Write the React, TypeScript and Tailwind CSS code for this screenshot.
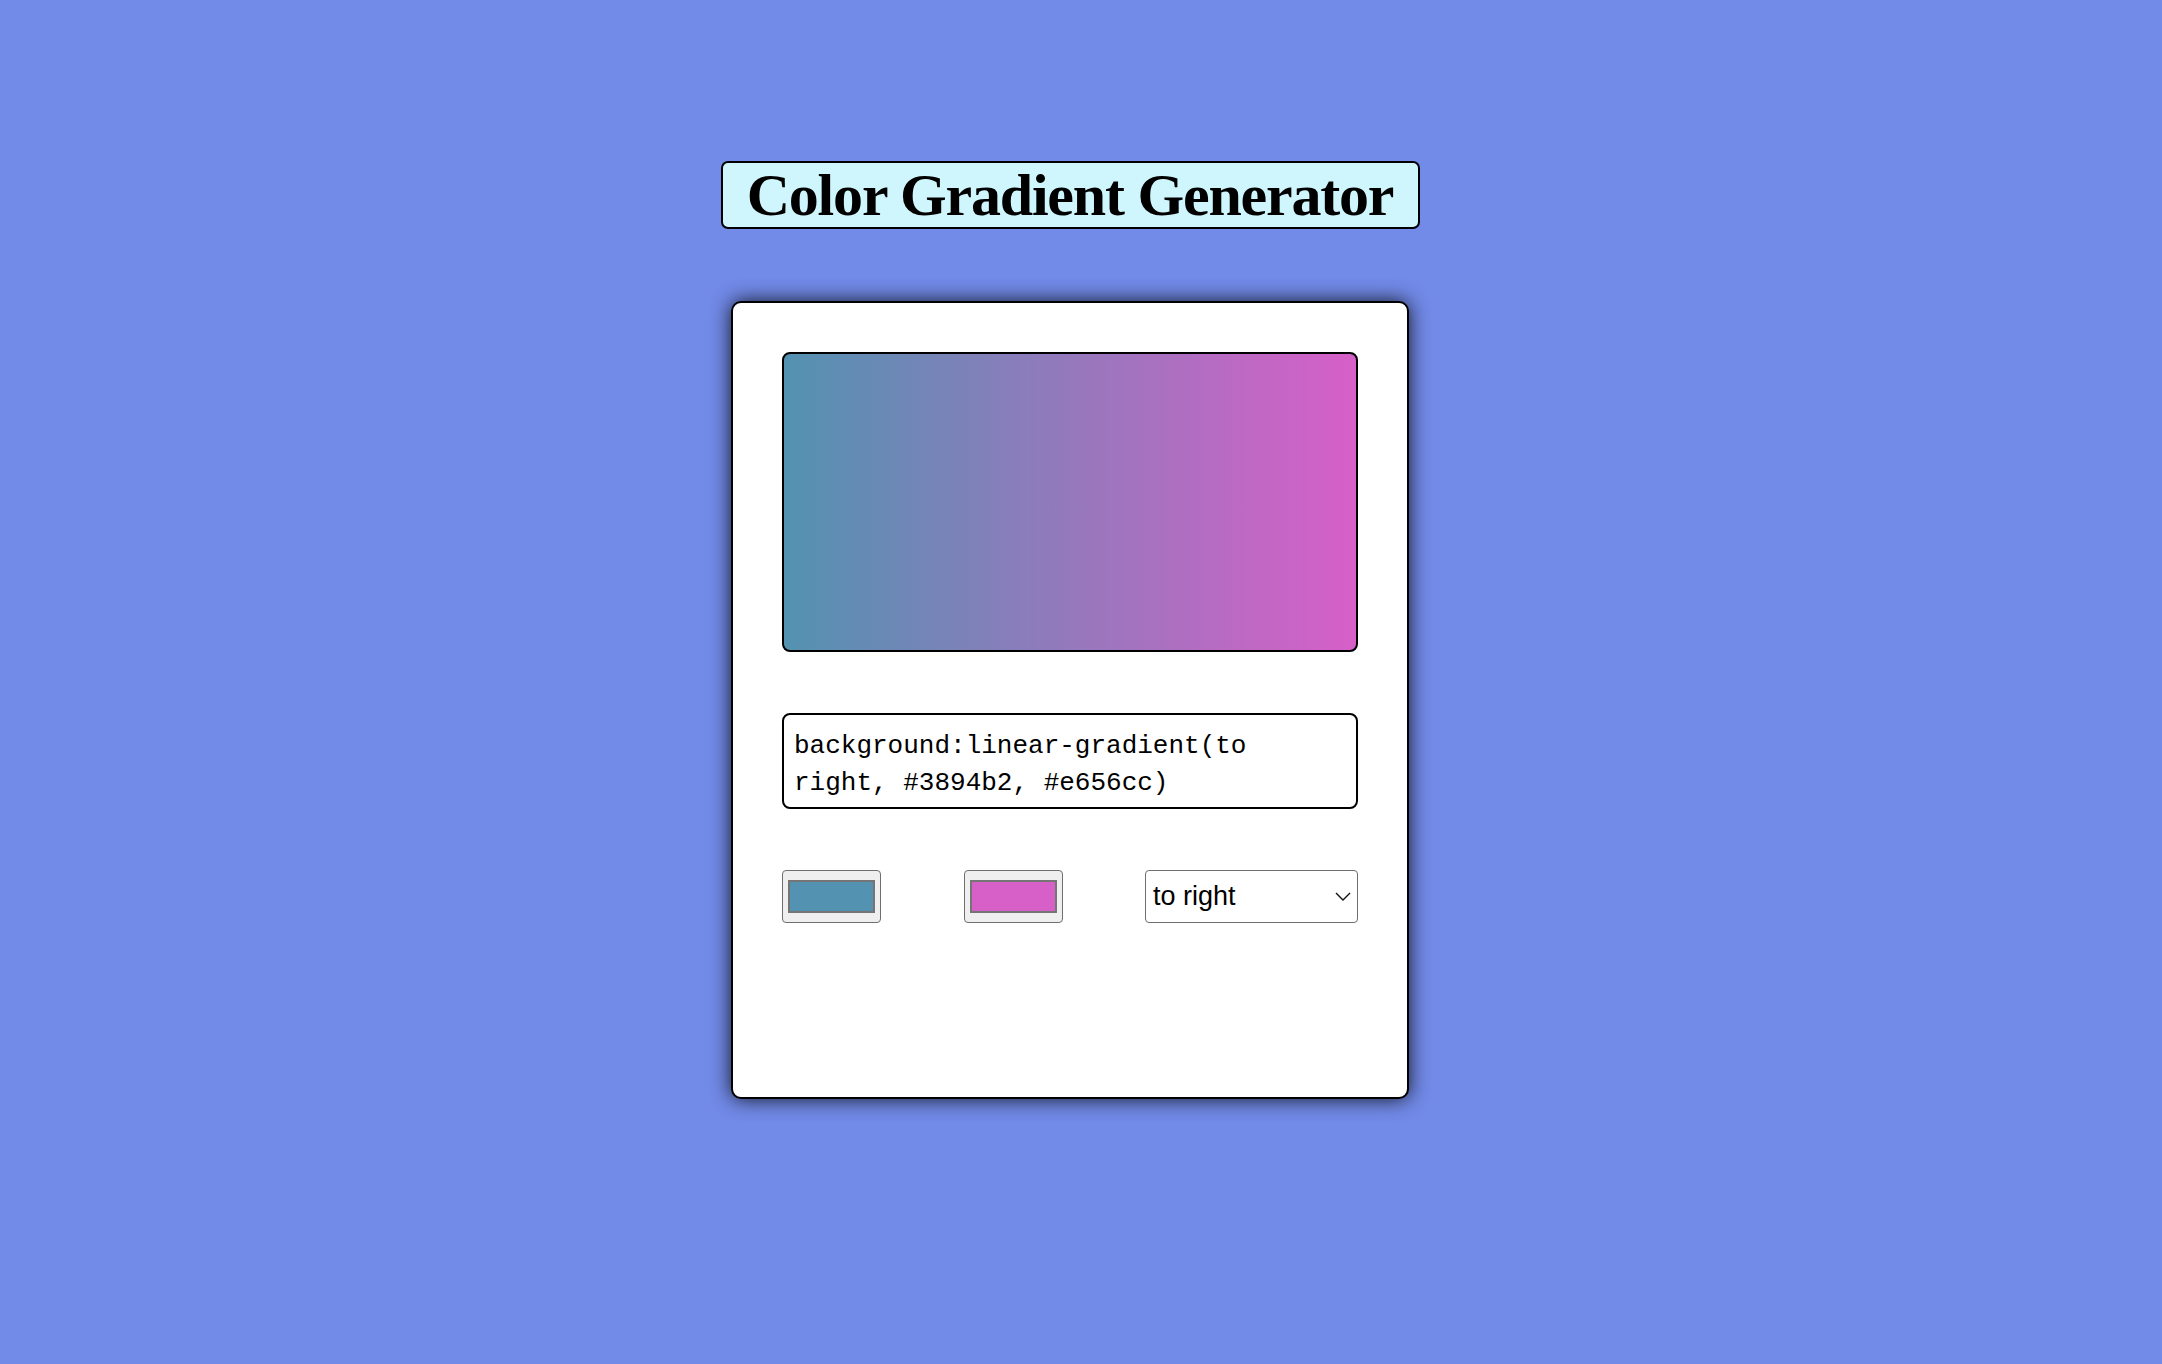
import { useState } from 'react';

export default function App() {
  const [direction, setDirection] = useState('to right');
  const [from, setFrom] = useState('#5392b1');
  const [to, setTo] = useState('#d75fc8');

  const cssText = `background:linear-gradient(${direction}, #3894b2, #e656cc)`;

  return (
    <div className="min-h-screen bg-[#728ae8] flex flex-col items-center pt-[161px] pr-[22px]">
      <h1 className="w-[699px] h-[68px] bg-[#cff6fc] border-2 border-black rounded-[7px] text-center font-['Liberation_Serif',serif] font-bold text-[60px] leading-[64px] tracking-[-1.2px] text-black">
        Color Gradient Generator
      </h1>

      <div className="mt-[72px] w-[678px] h-[798px] bg-white border-2 border-black rounded-[10px] px-[49px] pt-[49px] shadow-[0_0_20px_rgba(0,0,0,0.85)]">
        <div
          className="h-[300px] border-2 border-black rounded-[8px]"
          style={{ background: `linear-gradient(${direction}, ${from}, ${to})` }}
        />

        <div className="mt-[61px] h-[96px] border-2 border-black rounded-[8px] pt-[13px] px-[10px] font-['Liberation_Mono',monospace] text-[26px] leading-[37px] text-black">
          {cssText}
        </div>

        <div className="mt-[61px] flex items-start justify-between">
          <input
            type="color"
            value={from}
            onChange={(e) => setFrom(e.target.value)}
            className="w-[99px] h-[53px] bg-[#efefef] border-[1.5px] border-[#6f6f6f] rounded-[4px] px-[5px] py-[9px] cursor-pointer [&::-webkit-color-swatch-wrapper]:p-0 [&::-webkit-color-swatch]:border-2 [&::-webkit-color-swatch]:border-[#757575] [&::-webkit-color-swatch]:rounded-none"
          />
          <input
            type="color"
            value={to}
            onChange={(e) => setTo(e.target.value)}
            className="w-[99px] h-[53px] bg-[#efefef] border-[1.5px] border-[#6f6f6f] rounded-[4px] px-[5px] py-[9px] cursor-pointer [&::-webkit-color-swatch-wrapper]:p-0 [&::-webkit-color-swatch]:border-2 [&::-webkit-color-swatch]:border-[#757575] [&::-webkit-color-swatch]:rounded-none"
          />
          <div className="relative">
            <select
              value={direction}
              onChange={(e) => setDirection(e.target.value)}
              className="appearance-none w-[213px] h-[53px] bg-white border-[1.5px] border-[#6f6f6f] rounded-[4px] pl-[7px] font-['Liberation_Sans',Arial,sans-serif] text-[27px] text-black"
            >
              <option value="to right">to right</option>
              <option value="to left">to left</option>
              <option value="to bottom">to bottom</option>
              <option value="to top">to top</option>
            </select>
            <svg
              className="pointer-events-none absolute right-[7px] top-[22px]"
              width="16"
              height="9"
              viewBox="0 0 16 9"
              fill="none"
            >
              <path d="M1 1l7 7 7-7" stroke="#111" strokeWidth="1.4" />
            </svg>
          </div>
        </div>
      </div>
    </div>
  );
}
